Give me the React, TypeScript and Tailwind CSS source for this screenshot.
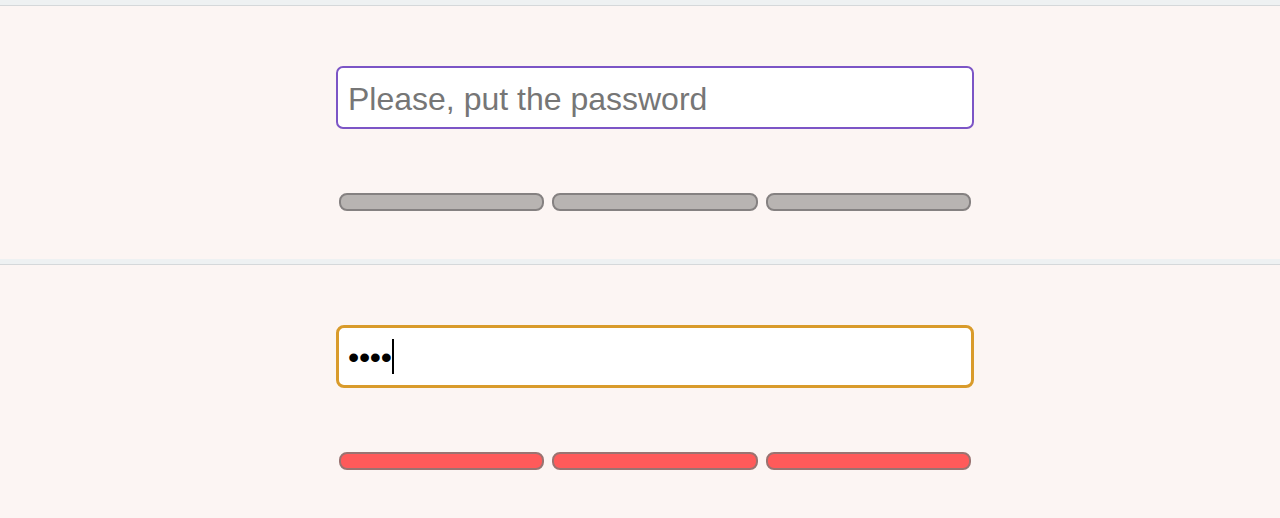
import React from 'react';

type Strength = 'empty' | 'weak';

const Divider: React.FC = () => (
  <div className="h-[6px] bg-[#eef1f2] border-b border-[#d5d8da]" />
);

const StrengthBars: React.FC<{ strength: Strength }> = ({ strength }) => {
  const barClass =
    strength === 'weak'
      ? 'bg-[#ff5a5a] border-[#9a7371]'
      : 'bg-[#b8b4b2] border-[#858181]';
  return (
    <div className="flex gap-2 px-[3px]">
      {[0, 1, 2].map(i => (
        <div key={i} className={`flex-1 h-[18px] rounded-[8px] border-2 ${barClass}`} />
      ))}
    </div>
  );
};

const PasswordSection: React.FC<{ value: string; strength: Strength; focused?: boolean }> = ({
  value,
  strength,
  focused
}) => (
  <section className="bg-[#fcf5f3] pt-[60px] pb-[48px] pl-[30px] flex justify-center">
    <div className="w-[638px]">
      {focused ? (
        <div className="h-[63px] rounded-[8px] border-[3px] border-[#d99b2b] bg-white flex items-center pl-[9px]">
          <span className="text-[32px] leading-none text-black tracking-[-0.3px]">{value}</span>
          <span className="w-[2px] h-[35px] bg-black" />
        </div>
      ) : (
        <input
          type="password"
          placeholder="Please, put the password"
          className="w-full h-[63px] rounded-[7px] border-2 border-[#7c55c6] bg-white pl-[10px] pt-[3px] text-[32px] text-black placeholder:text-[#767676] outline-none"
        />
      )}
      <div className="mt-[64px]">
        <StrengthBars strength={strength} />
      </div>
    </div>
  </section>
);

export default function App() {
  return (
    <div className="w-[1280px] h-[518px] overflow-hidden bg-[#fcf5f3] font-['Liberation_Sans',Arial,sans-serif]">
      <Divider />
      <PasswordSection value="" strength="empty" />
      <Divider />
      <PasswordSection value="••••" strength="weak" focused />
    </div>
  );
}
